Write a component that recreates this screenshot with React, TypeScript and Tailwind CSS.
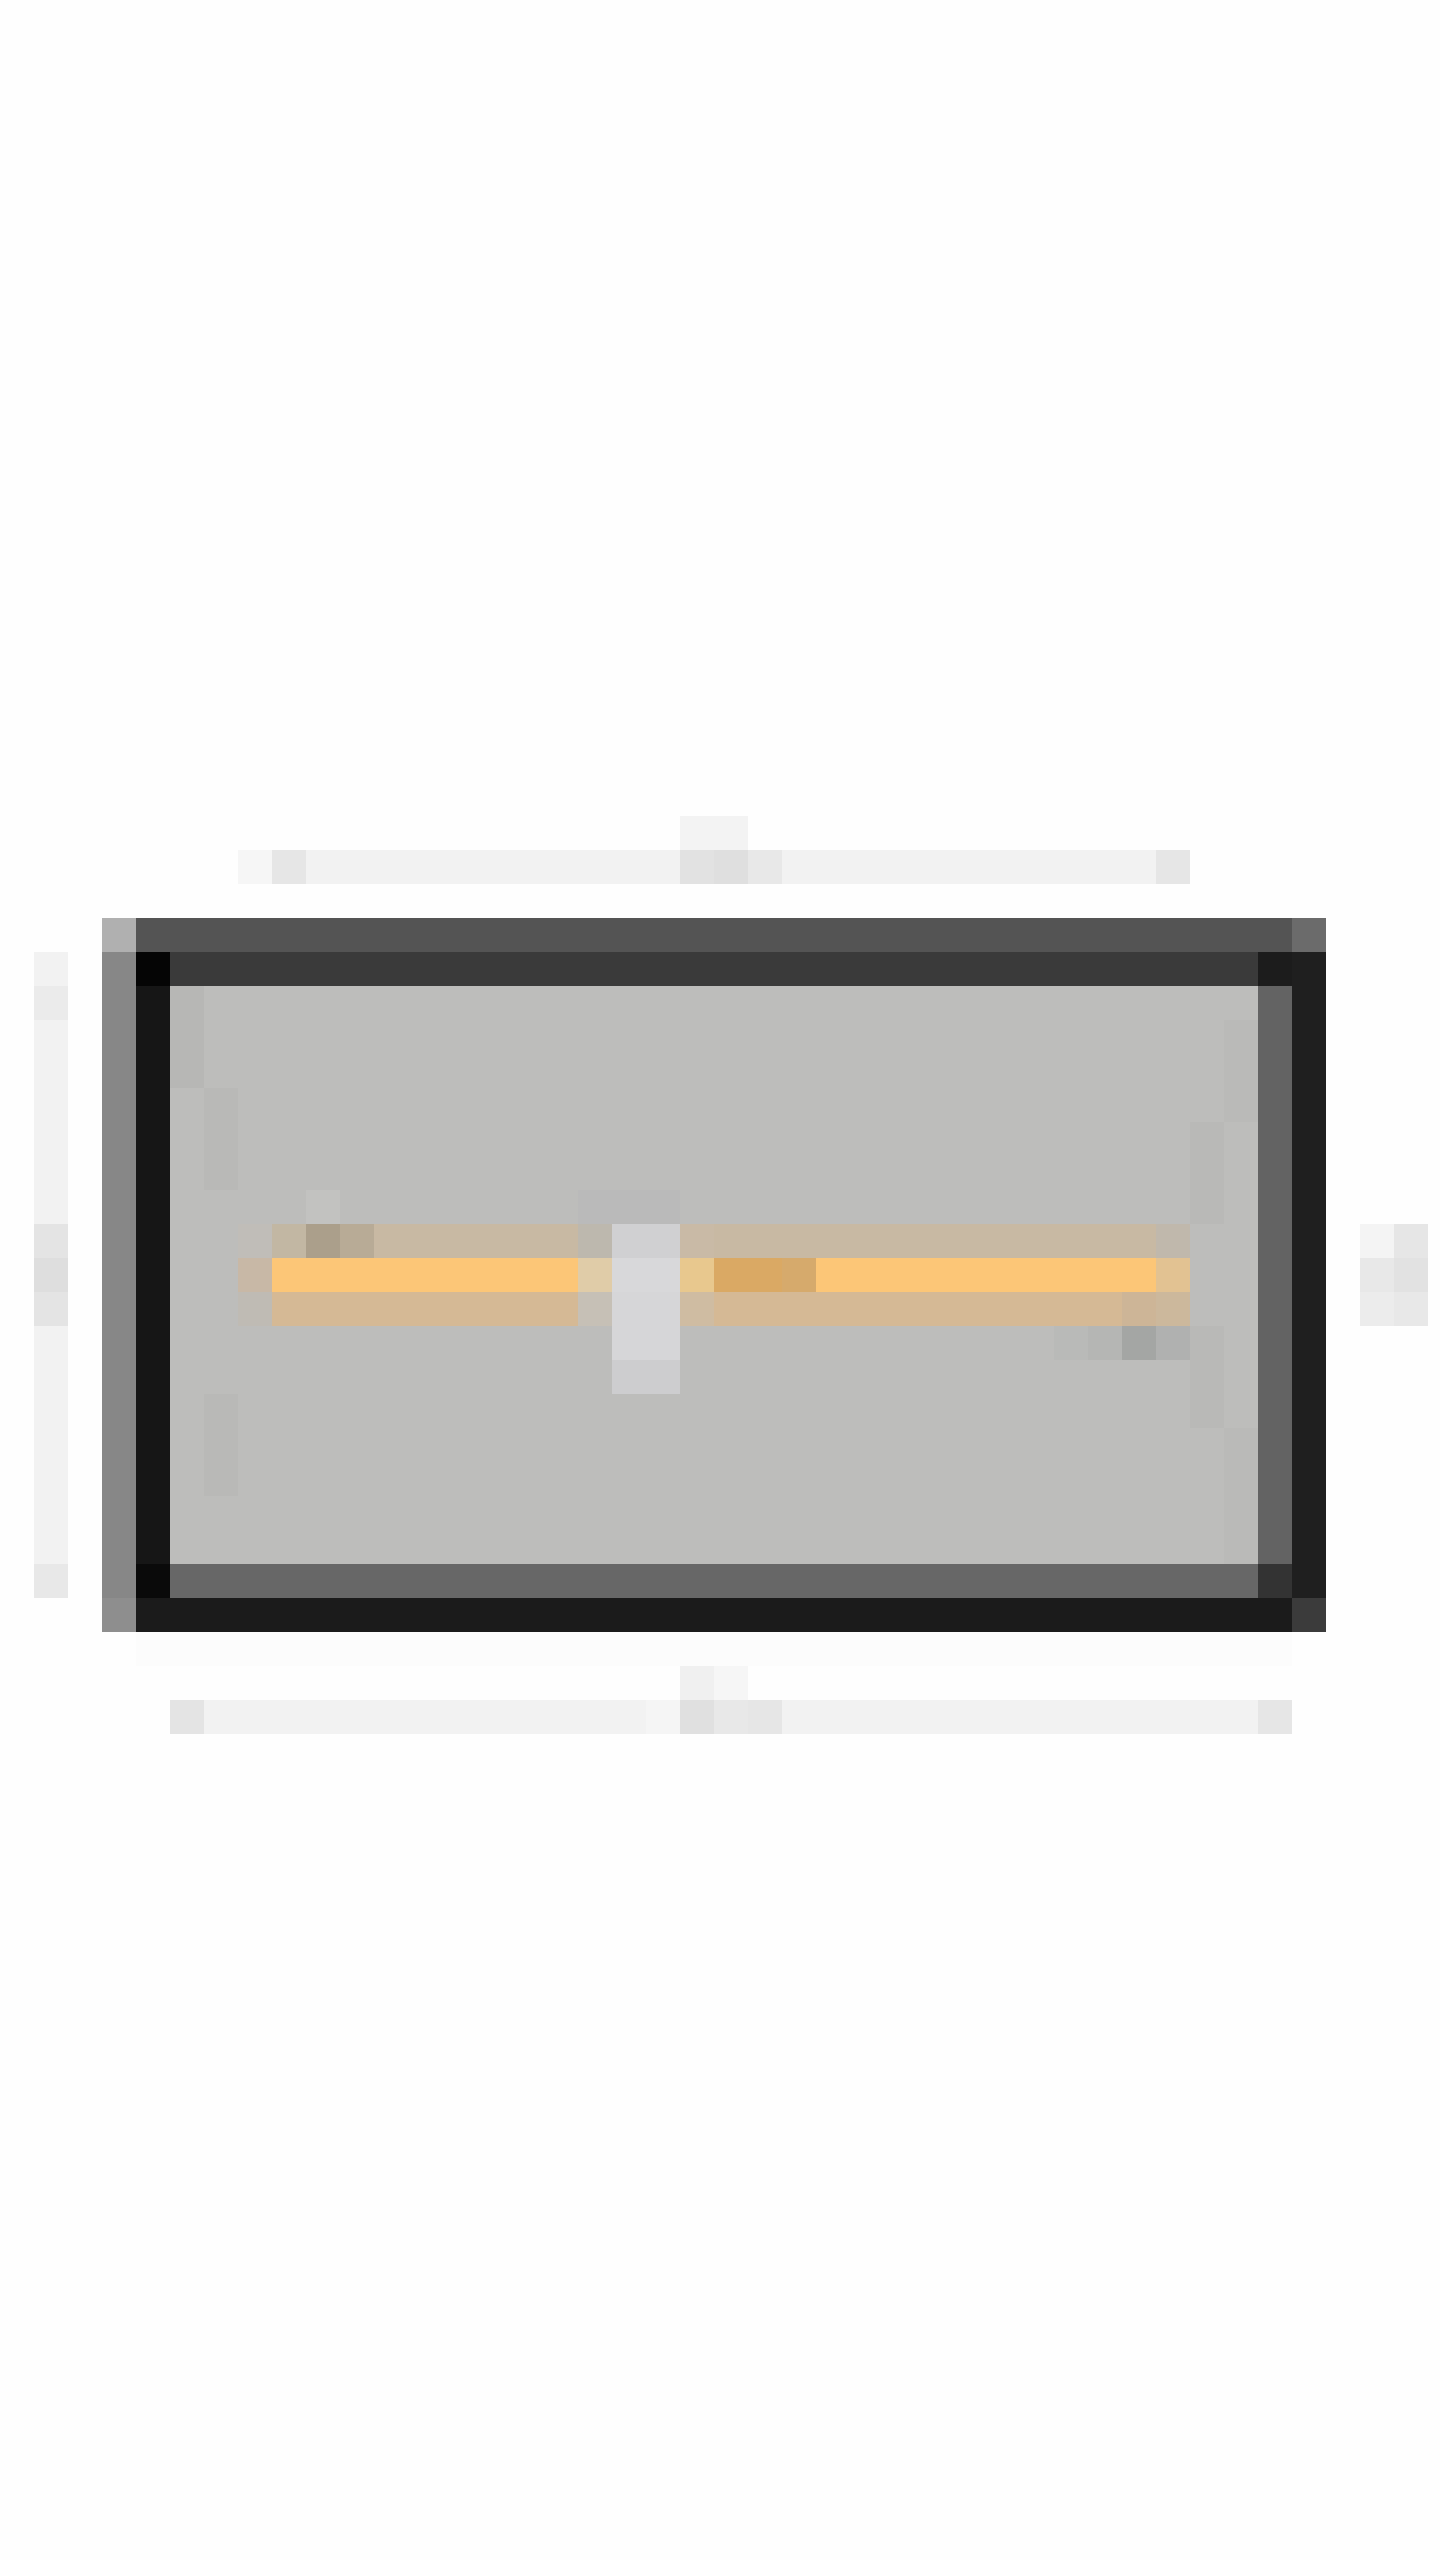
import React from 'react';

// ── Pixel grid: the picture is a magnified slider icon, 34px per cell ─────
const CELL = 34;

// [col, row, colSpan, rowSpan, colour]
type Cell = [number, number, number, number, string];

// faint ghost rulers around the frame
const RULERS: Cell[] = [
  [20, 24, 2, 1, '#f3f3f3'],
  [7, 25, 1, 1, '#f6f6f6'],
  [8, 25, 1, 1, '#e6e6e6'],
  [9, 25, 11, 1, '#f2f2f2'],
  [20, 25, 1, 1, '#e2e2e2'],
  [21, 25, 1, 1, '#dfdfdf'],
  [22, 25, 1, 1, '#e8e8e8'],
  [23, 25, 11, 1, '#f2f2f2'],
  [34, 25, 1, 1, '#e6e6e6'],

  [1, 28, 1, 1, '#f2f2f2'],
  [1, 29, 1, 1, '#ebebeb'],
  [1, 30, 1, 6, '#f2f2f2'],
  [1, 36, 1, 1, '#e4e4e4'],
  [1, 37, 1, 1, '#dedede'],
  [1, 38, 1, 1, '#e4e4e4'],
  [1, 39, 1, 7, '#f2f2f2'],
  [1, 46, 1, 1, '#e8e8e8'],

  [40, 36, 1, 1, '#f4f4f4'],
  [40, 37, 1, 1, '#e8e8e8'],
  [40, 38, 1, 1, '#ececec'],
  [41, 36, 1, 1, '#e6e6e6'],
  [41, 37, 1, 1, '#e2e2e2'],
  [41, 38, 1, 1, '#e8e8e8'],

  [4, 48, 34, 1, '#fcfcfc'],
  [20, 49, 1, 1, '#f0f0f0'],
  [21, 49, 1, 1, '#f6f6f6'],
  [5, 50, 1, 1, '#e4e4e4'],
  [6, 50, 13, 1, '#f2f2f2'],
  [19, 50, 1, 1, '#f5f5f5'],
  [20, 50, 1, 1, '#e0e0e0'],
  [21, 50, 1, 1, '#e8e8e8'],
  [22, 50, 1, 1, '#e6e6e6'],
  [23, 50, 14, 1, '#f2f2f2'],
  [37, 50, 1, 1, '#e6e6e6'],
];

// bevelled frame
const FRAME: Cell[] = [
  [3, 27, 1, 1, '#b0b0b0'],
  [4, 27, 34, 1, '#545454'],
  [38, 27, 1, 1, '#6b6b6b'],
  [3, 28, 1, 19, '#878787'],
  [3, 47, 1, 1, '#8e8e8e'],
  [4, 28, 1, 1, '#050505'],
  [4, 29, 1, 17, '#161616'],
  [4, 46, 1, 1, '#0a0a0a'],
  [5, 28, 32, 1, '#3a3a3a'],
  [37, 28, 1, 1, '#1c1c1c'],
  [38, 28, 1, 19, '#1f1f1f'],
  [38, 47, 1, 1, '#3b3b3b'],
  [37, 29, 1, 17, '#636363'],
  [37, 46, 1, 1, '#333333'],
  [5, 46, 32, 1, '#676767'],
  [4, 47, 34, 1, '#1b1b1b'],
  [5, 29, 32, 17, '#bdbdbb'],
  // subtle shading inside
  [5, 29, 1, 3, '#b7b7b5'],
  [6, 32, 1, 3, '#b9b9b7'],
  [6, 41, 1, 3, '#b9b9b7'],
  [35, 33, 1, 3, '#b9b9b7'],
  [35, 39, 1, 3, '#b9b9b7'],
  [36, 30, 1, 3, '#baBab8'],
  [36, 42, 1, 4, '#babab8'],
  [17, 35, 3, 1, '#bababa'],
  [9, 35, 1, 1, '#c2c2c0'],
];

// slider track + thumb
const SLIDER: Cell[] = [
  [7, 36, 1, 1, '#c0bdb8'],
  [8, 36, 1, 1, '#c2b7a3'],
  [9, 36, 1, 1, '#ab9f8b'],
  [10, 36, 1, 1, '#b8ab96'],
  [11, 36, 6, 1, '#c8b9a3'],
  [17, 36, 1, 1, '#bdb8ae'],
  [20, 36, 1, 1, '#c9baa6'],
  [21, 36, 13, 1, '#c8b9a3'],
  [34, 36, 1, 1, '#c0b8ac'],

  [7, 37, 1, 1, '#c8b8a6'],
  [8, 37, 9, 1, '#fcc677'],
  [17, 37, 1, 1, '#e0cca8'],
  [20, 37, 1, 1, '#e8c88e'],
  [21, 37, 2, 1, '#daa964'],
  [23, 37, 1, 1, '#d6aa6c'],
  [24, 37, 10, 1, '#fcc677'],
  [34, 37, 1, 1, '#e2c292'],

  [7, 38, 1, 1, '#bfbbb4'],
  [8, 38, 9, 1, '#d5b995'],
  [17, 38, 1, 1, '#c6c0b6'],
  [20, 38, 1, 1, '#cfbca2'],
  [21, 38, 12, 1, '#d5b995'],
  [33, 38, 1, 1, '#cdb597'],
  [34, 38, 1, 1, '#ccb89c'],

  [31, 39, 1, 1, '#b9bab8'],
  [32, 39, 1, 1, '#b5b6b4'],
  [33, 39, 1, 1, '#a4a6a4'],
  [34, 39, 1, 1, '#b0b1b0'],

  // thumb
  [18, 36, 2, 1, '#d0d0d2'],
  [18, 37, 2, 1, '#d8d8da'],
  [18, 38, 2, 2, '#d6d6d8'],
  [18, 40, 2, 1, '#cdcdcf'],
];

function Cells({ cells }: { cells: Cell[] }) {
  return (
    <>
      {cells.map(([c, r, w, h, fill], i) => (
        <rect key={i} x={c * CELL} y={r * CELL} width={w * CELL} height={h * CELL} fill={fill} />
      ))}
    </>
  );
}

export default function App() {
  return (
    <div className="w-[1440px] h-[2560px] bg-white overflow-hidden">
      <svg
        className="block"
        width={1440}
        height={2560}
        viewBox="0 0 1440 2560"
        shapeRendering="crispEdges"
        aria-label="slider"
      >
        <rect x={0} y={0} width={1440} height={2560} fill="#fefefe" />
        <Cells cells={RULERS} />
        <Cells cells={FRAME} />
        <Cells cells={SLIDER} />
      </svg>
    </div>
  );
}
